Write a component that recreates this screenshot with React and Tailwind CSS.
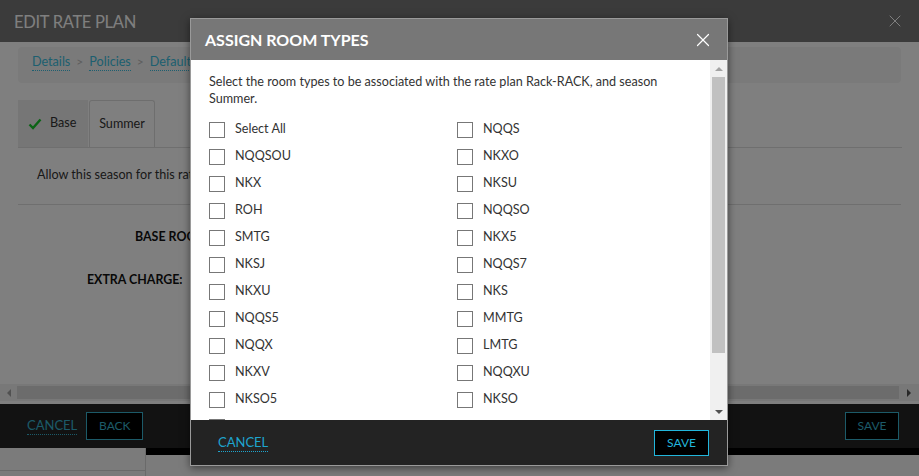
import { X } from 'lucide-react';

const leftRooms = ['Select All', 'NQQSOU', 'NKX', 'ROH', 'SMTG', 'NKSJ', 'NKXU', 'NQQS5', 'NQQX', 'NKXV', 'NKSO5', 'NKSO7'];
const rightRooms = ['NQQS', 'NKXO', 'NKSU', 'NQQSO', 'NKX5', 'NQQS7', 'NKS', 'MMTG', 'LMTG', 'NQQXU', 'NKSO'];

function RoomCheck({ label }) {
    return (
        <label className="flex items-center h-[27px] gap-[10px] text-[12.6px] text-[#333]">
            <span className="w-[16px] h-[16px] border border-[#777] bg-white shrink-0" />
            <span>{label}</span>
        </label>
    );
}

function Crumb({ children }) {
    return (
        <span className="text-[#3bbfe0] border-b border-dotted border-[#3bbfe0] leading-[16px]">{children}</span>
    );
}

export default function App() {
    return (
        <div className="relative w-[919px] h-[476px] overflow-hidden font-['Lato','Open_Sans',sans-serif]">
            {/* page behind the modal */}
            <div className="flex flex-col h-full bg-[#f6f6f6]">
                <div className="h-[42px] bg-[#767676] flex items-center justify-between pl-[14px] pr-[14px] pt-[2px] shrink-0">
                    <span className="text-white text-[16.5px] tracking-[-0.3px]">EDIT RATE PLAN</span>
                    <X className="w-[20px] h-[20px] text-white mb-[2px]" strokeWidth={1.2} />
                </div>
                <div className="h-[362px] bg-white flex flex-col shrink-0">
                    <div className="flex-1 px-[18px] pt-[5px]">
                        <div className="h-[36px] rounded-[4px] bg-[#f4f4f4] flex items-center gap-[6px] pl-[14px] pb-[6px] text-[12.6px]">
                            <Crumb>Details</Crumb>
                            <span className="text-[#bbb] text-[12px]">&gt;</span>
                            <Crumb>Policies</Crumb>
                            <span className="text-[#bbb] text-[12px]">&gt;</span>
                            <Crumb>Default Rates</Crumb>
                        </div>
                        <div className="mt-[17px] flex h-[48px] border-b border-[#dedede] mr-[-1px]">
                            <div className="w-[70px] bg-[#ececec] flex items-center gap-[8px] pl-[10px] text-[12.6px] text-[#333]">
                                <svg viewBox="0 0 14 12" className="w-[14px] h-[12px]">
                                    <path d="M1.5 6.5 L5 10 L12.5 1.5" fill="none" stroke="#16c72a" strokeWidth="2.4" />
                                </svg>
                                <span>Base</span>
                            </div>
                            <div className="w-[66px] ml-[1px] border border-b-0 border-[#dcdcdc] rounded-t-[3px] flex items-center justify-center text-[12.6px] text-[#333]">
                                Summer
                            </div>
                        </div>
                        <div className="h-[57px] flex items-center pl-[19px] pb-[2px] text-[12.6px] text-[#333] border-b border-[#dedede]">
                            Allow this season for this rate plan
                        </div>
                        <div className="mt-[23px] flex flex-col gap-[24px] text-[12.4px] font-bold text-[#111]">
                            <div className="pl-[117px]">BASE ROOM RATE:</div>
                            <div className="pl-[69px]">EXTRA CHARGE:</div>
                        </div>
                    </div>
                    <div className="h-[17px] mb-[3px] flex items-center bg-[#f0f0f0]">
                        <span className="w-[17px] flex justify-center">
                            <span className="w-0 h-0 border-y-[4px] border-y-transparent border-r-[4px] border-r-[#a3a3a3]" />
                        </span>
                        <div className="flex-1 h-[13px] bg-[#d8d8d8]" />
                        <span className="w-[20px] flex justify-center">
                            <span className="w-0 h-0 border-y-[4px] border-y-transparent border-l-[4px] border-l-[#505050]" />
                        </span>
                    </div>
                </div>
                <div className="h-[44px] bg-[#242424] flex items-center justify-between pl-[27px] pr-[20px] shrink-0">
                    <div className="flex items-center gap-[9px]">
                        <span className="text-[13px] text-[#38b4d0] border-b border-dotted border-[#38b4d0] leading-[17px]">CANCEL</span>
                        <span className="w-[57px] h-[28px] border border-[#38b4d0] bg-black flex items-center justify-center text-[12px] text-[#38b4d0]">BACK</span>
                    </div>
                    <span className="w-[54px] h-[28px] border border-[#38b4d0] bg-black flex items-center justify-center text-[12px] text-[#38b4d0]">SAVE</span>
                </div>
                <div className="flex-1 flex">
                    <div className="w-[146px] border-r border-[#d4d4d4] flex flex-col">
                        <div className="h-[23px] border-b border-[#d4d4d4]" />
                    </div>
                    <div className="flex-1 flex flex-col">
                        <div className="h-[7px] bg-black" />
                    </div>
                </div>
            </div>

            {/* overlay */}
            <div className="absolute inset-0 bg-black/50" />

            {/* modal */}
            <div className="absolute left-[190px] top-[18px] w-[538px] h-[448px] border border-[#9a9a9a] bg-white flex flex-col shadow-[0_2px_8px_rgba(0,0,0,0.5)]">
                <div className="h-[41px] bg-[#777] flex items-center justify-between pl-[14px] pr-[13px] shrink-0">
                    <span className="text-white text-[16px] font-bold">ASSIGN ROOM TYPES</span>
                    <X className="w-[22px] h-[22px] text-white" strokeWidth={1.3} />
                </div>
                <div className="h-[360px] flex shrink-0">
                    <div className="flex-1 overflow-hidden pl-[18px] pt-[13px] pr-[20px]">
                        <p className="text-[12.6px] leading-[17px] text-[#333]">
                            Select the room types to be associated with the rate plan Rack-RACK, and season Summer.
                        </p>
                        <div className="mt-[9px] grid grid-cols-[248px_1fr]">
                            <div>
                                {leftRooms.map((r) => (
                                    <RoomCheck key={r} label={r} />
                                ))}
                            </div>
                            <div>
                                {rightRooms.map((r) => (
                                    <RoomCheck key={r} label={r} />
                                ))}
                            </div>
                        </div>
                    </div>
                    <div className="w-[17px] bg-[#f0f0f0] flex flex-col items-center shrink-0">
                        <span className="h-[17px] flex items-center">
                            <span className="w-0 h-0 border-x-[4px] border-x-transparent border-b-[4px] border-b-[#a3a3a3]" />
                        </span>
                        <div className="w-[13px] h-[276px] bg-[#c1c1c1]" />
                        <div className="flex-1" />
                        <span className="h-[17px] flex items-center">
                            <span className="w-0 h-0 border-x-[4px] border-x-transparent border-t-[4px] border-t-[#505050]" />
                        </span>
                    </div>
                </div>
                <div className="flex-1 bg-[#232323] flex items-center justify-between pl-[27px] pr-[18px]">
                    <span className="text-[13px] text-[#1ea5cf] border-b border-dotted border-[#1ea5cf] leading-[17px]">CANCEL</span>
                    <span className="w-[55px] h-[26px] border border-[#22b6dc] bg-black flex items-center justify-center text-[12px] text-[#22b6dc]">SAVE</span>
                </div>
            </div>
        </div>
    );
}
